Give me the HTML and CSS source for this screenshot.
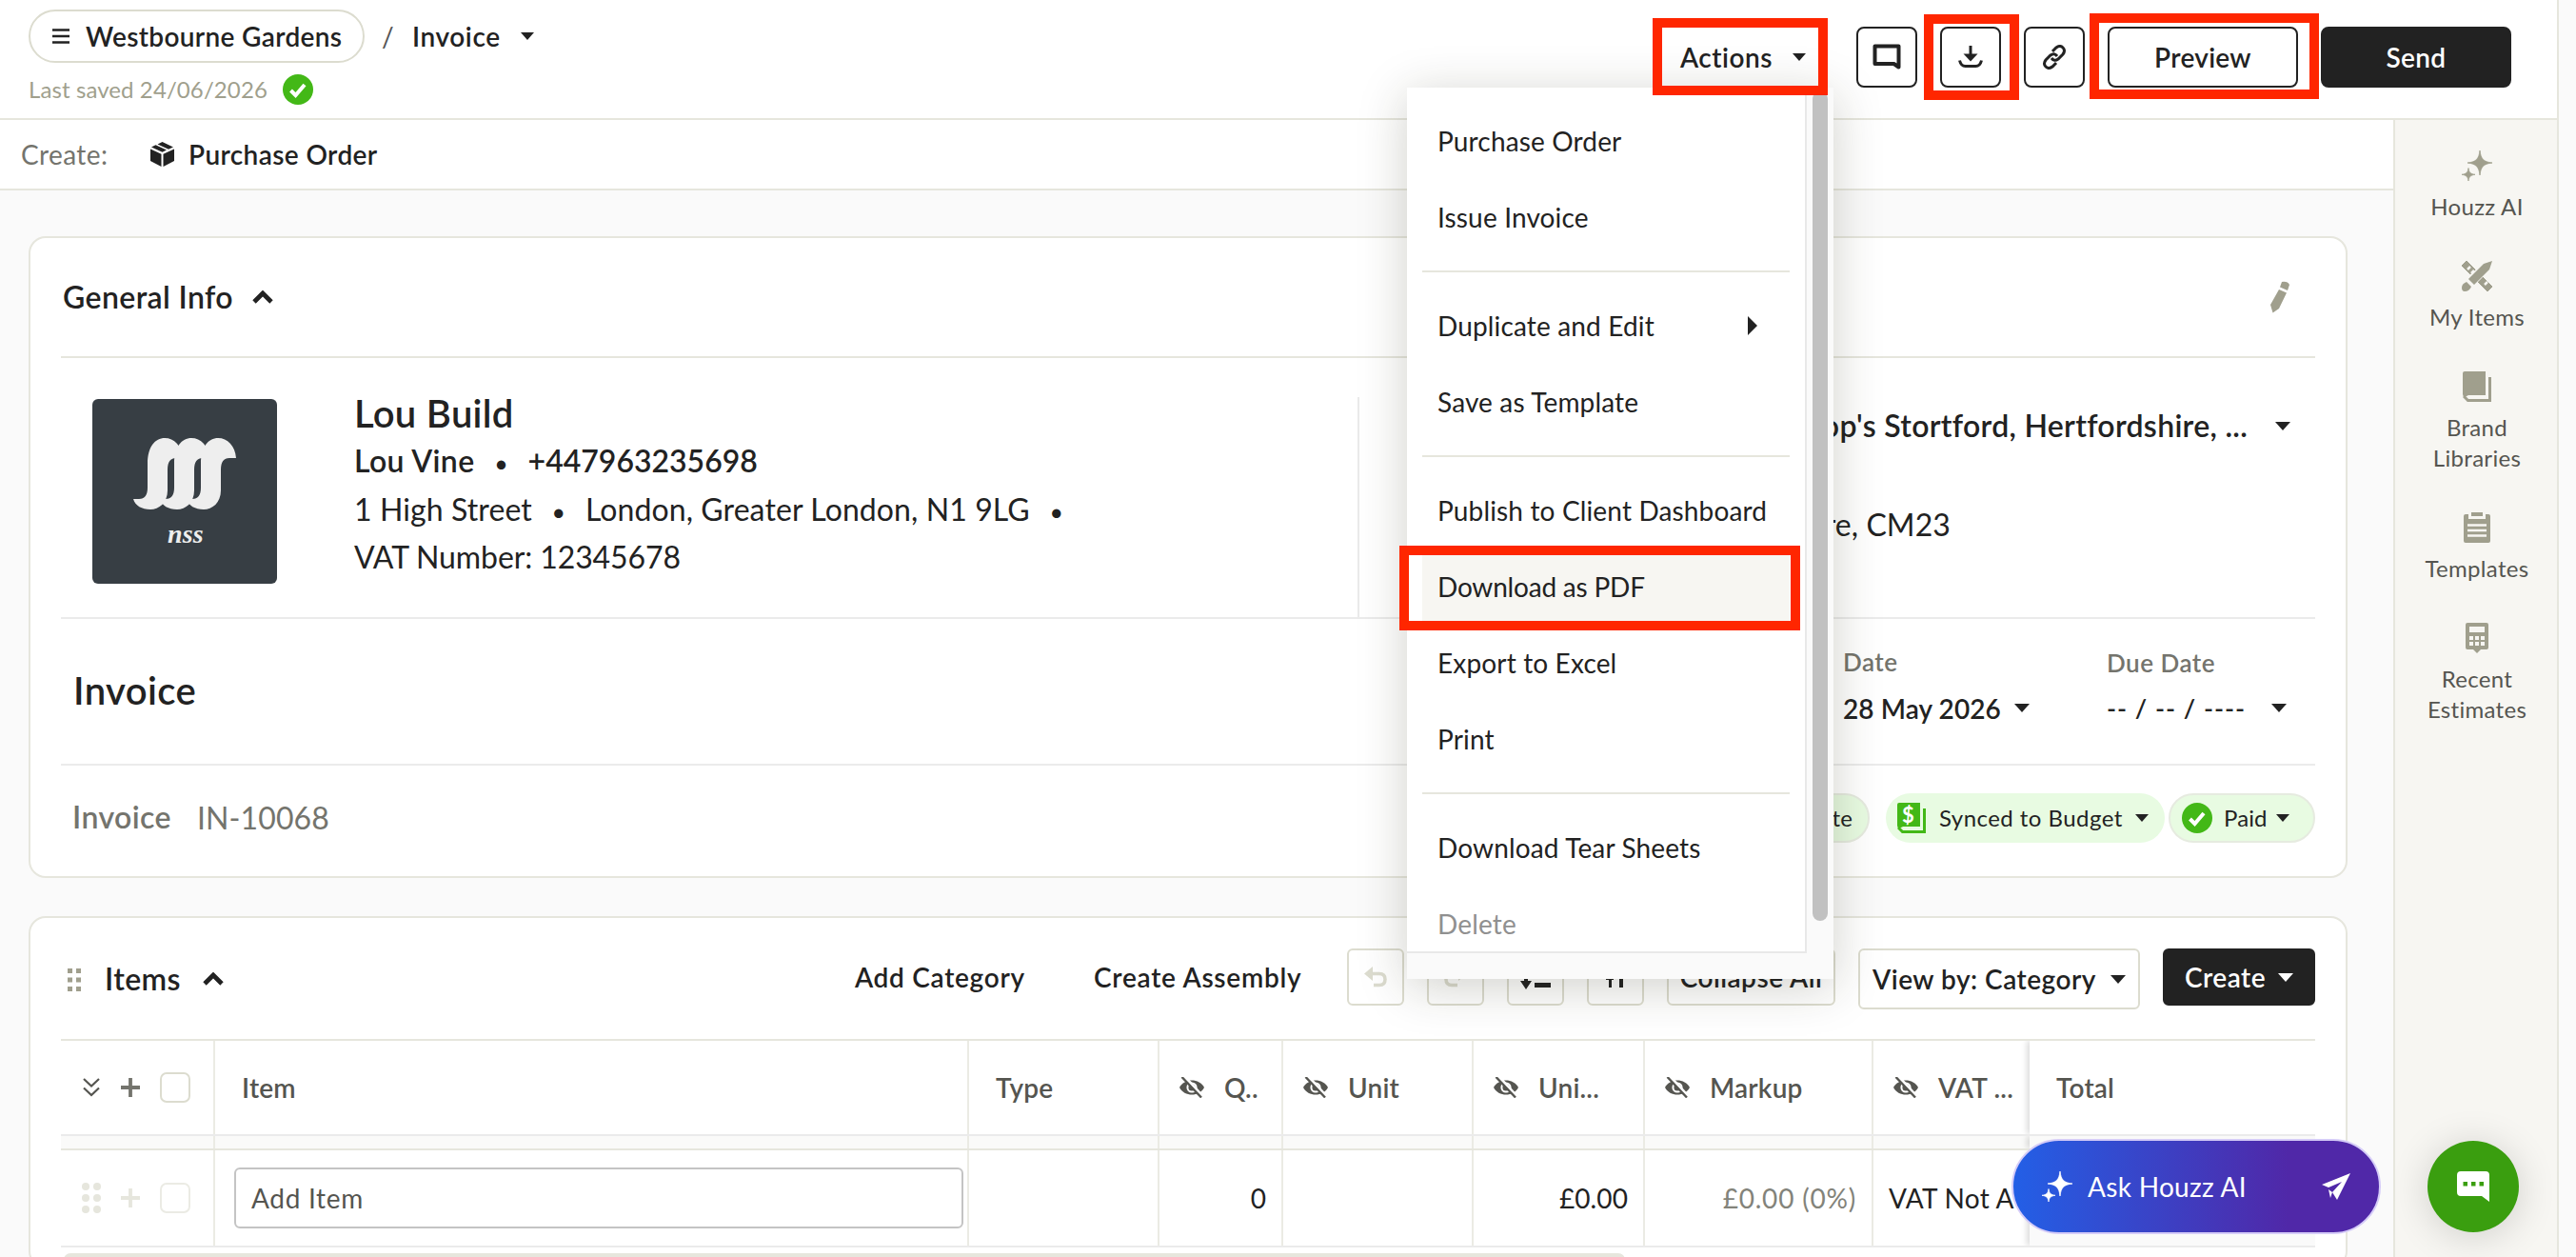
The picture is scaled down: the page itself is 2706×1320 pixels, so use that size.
FILE: index.html
```
<!DOCTYPE html>
<html lang="en-GB">
<head>
  <meta charset="UTF-8" />
  <title>Westbourne Gardens - Invoice</title>
  <link rel="stylesheet" href="styles.css">
</head>
<body>
  <!-- shared icons -->
  <svg class="defs" width="0" height="0">
    <symbol id="i-check" viewBox="0 0 32 32"><circle cx="16" cy="16" r="16" fill="#43b817"/><path d="M8.5 17l5 5L23 11" fill="none" stroke="#fff" stroke-width="4"/></symbol>
    <symbol id="i-up" viewBox="0 0 22 14"><path d="M2 12l9-9 9 9" fill="none" stroke="currentColor" stroke-width="4.8"/></symbol>
    <symbol id="i-eye" viewBox="0 0 26 22"><path d="M0 11C5 1 21 1 26 11C21 21 5 21 0 11z" fill="#555550"/><circle cx="13" cy="11" r="4.6" fill="none" stroke="#fff" stroke-width="2"/><path d="M5-1l20 22" stroke="#fff" stroke-width="3"/><path d="M2.500 0l20.500 21.500" stroke="#555550" stroke-width="2.400"/></symbol>
    <symbol id="i-spark" viewBox="0 0 32 32"><path d="M19 0c1 9 4 12 13 13c-9 1-12 4-13 13c-1-9-4-12-13-13c9-1 12-4 13-13zM7 18.500c.6 4.600 2.200 6.200 7 6.800c-4.800.6-6.400 2.200-7 6.700c-.6-4.500-2.200-6.100-7-6.700c4.800-.6 6.400-2.200 7-6.800z" fill="currentColor" stroke="currentColor" stroke-width=".8"/></symbol>
    <symbol id="i-plus" viewBox="0 0 20 20"><path d="M10 0v20M0 10h20" stroke="currentColor" stroke-width="3.800"/></symbol>
    <symbol id="i-book" viewBox="0 0 30 32"><path d="M2 0h22v25H6L2 27Q0 26 0 24V2Q0 0 2 0z" fill="currentColor"/><path d="M28.500 6v24.500H5.500L1 26" fill="none" stroke="currentColor" stroke-width="3"/></symbol>
  </svg>

  <div class="app">
    <header class="topbar">
      <div>
        <div class="crumbs">
          <a class="project"><svg width="18" height="16" viewBox="0 0 18 16"><path d="M0 1.500h18M0 8h18M0 14.500h18" stroke="#222" stroke-width="2.600"/></svg>Westbourne Gardens</a>
          <span class="slash">/</span>
          <span class="doc">Invoice</span><i class="caret"></i>
        </div>
        <div class="saved"><span>Last saved 24/06/2026</span><svg width="32" height="32"><use href="#i-check"/></svg></div>
      </div>
      <div class="top-actions">
        <button class="actions-btn">Actions <i class="caret"></i></button>
        <button class="btn icon"><svg width="30" height="28" viewBox="0 0 30 28"><path d="M2.500 2.500h25v22l-5-3.500h-20z" fill="none" stroke="#222" stroke-width="4" stroke-linejoin="round"/></svg></button>
        <button class="btn icon"><svg width="26" height="24" viewBox="0 0 26 24"><path d="M13 0v14" stroke="#222" stroke-width="3"/><path d="M5.500 8.500h15L13 16.500z" fill="#222"/><path d="M1.500 15.500q1.500 6 6 6h11q4.500 0 6-6" fill="none" stroke="#222" stroke-width="3"/></svg></button>
        <button class="btn icon link"><svg width="26" height="26" viewBox="0 0 26 26" fill="none" stroke="#222" stroke-width="3"><path d="M11 7l4-4q4-3 7 0q3 3 0 7l-5 5q-4 3-7-1"/><path d="M15 19l-4 4q-4 3-7 0q-3-3 0-7l5-5q4-3 7 1"/></svg></button>
        <button class="btn wide">Preview</button>
        <button class="btn wide dark">Send</button>
      </div>
    </header>

    <div class="body">
      <div class="content">
        <div class="create-bar">
          <span class="label">Create:</span>
          <svg width="25" height="26" viewBox="0 0 25 26"><path d="M0 7.500l11.500 5.200V26L0 20zM25 7.500l-11.500 5.200V26L25 20zM1 5.500l4.500-2.200l11.500 5.200l-4.500 2.300zM7.500 2.400L12.500 0l11.500 5.500l-5 2.300z" fill="#222"/></svg>
          <b>Purchase Order</b>
        </div>

        <main>
          <section class="card">
            <div class="card-head">
              <h2>General Info</h2>
              <svg width="22" height="14"><use href="#i-up"/></svg>
              <svg class="pencil" width="20" height="34" viewBox="0 0 20 34"><path d="M12 1q6-1 8 3l-2 6l-8-3.500zM9 9l8 3.500L9 29l-6.500 4.500L0 25z" fill="#a09f8d"/></svg>
            </div>

            <div class="company">
              <svg class="logo" width="194" height="194" viewBox="0 0 194 194">
                <rect width="194" height="194" rx="6" fill="#373e44"/>
                <g fill="#eee">
                  <path id="s" d="M43 105h6c6 0 9-4 9-12V68c0-18 8-27 18-27s18 8 19 21h-7c-6 0-9 4-9 12v22c0 13-9 20-18 20S45 112 43 105z"/>
                  <use href="#s" x="28"/>
                  <use href="#s" x="56"/>
                  <text x="79" y="151" class="logo-text">nss</text>
                </g>
              </svg>
              <div class="company-text">
                <h1>Lou Build</h1>
                <p class="contact"><b>Lou Vine</b><i>•</i><b>+447963235698</b></p>
                <p>1 High Street<i>•</i>London, Greater London, N1 9LG<i>•</i></p>
                <p class="vat-number">VAT Number: 12345678</p>
              </div>
              <div class="address">
                <p class="address-title"><b>Bishop's Stortford, Hertfordshire, ...</b><i class="caret lg"></i></p>
                <p class="address-line">Hertfordshire, CM23</p>
              </div>
            </div>

            <div class="doc-row">
              <h1>Invoice</h1>
              <div class="date"><label>Date</label><span>28 May 2026<i class="caret lg"></i></span></div>
              <div class="date due"><label>Due Date</label><span><em>-- / -- / ----</em><i class="caret lg"></i></span></div>
            </div>

            <div class="status-row">
              <b>Invoice</b><span class="number">IN-10068</span>
              <span class="pill outline estimate">Up to date</span>
              <span class="pill synced"><svg width="30" height="32"><use href="#i-book"/></svg><small>$</small>Synced to Budget<i class="caret"></i></span>
              <span class="pill outline paid"><svg width="32" height="32"><use href="#i-check"/></svg>Paid<i class="caret"></i></span>
            </div>
          </section>

          <section class="card items">
            <div class="items-head">
              <svg width="14" height="24" viewBox="0 0 14 24" fill="#a09f8d"><path d="M0 0h5v5H0zM9 0h5v5H9zM0 9.500h5v5H0zM9 9.500h5v5H9zM0 19h5v5H0zM9 19h5v5H9z"/></svg>
              <h2>Items</h2>
              <svg width="22" height="14"><use href="#i-up"/></svg>
              <a class="add-category">Add Category</a>
              <a class="create-assembly">Create Assembly</a>
              <button class="tool"><svg width="24" height="22" viewBox="0 0 24 22"><path d="M0 7.500L9 0v15z" fill="#dcdccf"/><path d="M7 7.500h9q6 0 6 6t-6 6h-6" fill="none" stroke="#dcdccf" stroke-width="3.500"/></svg></button>
              <button class="tool"><svg class="flip" width="24" height="22" viewBox="0 0 24 22"><path d="M0 7.500L9 0v15z" fill="#dcdccf"/><path d="M7 7.500h9q6 0 6 6t-6 6h-6" fill="none" stroke="#dcdccf" stroke-width="3.500"/></svg></button>
              <button class="tool"><svg width="32" height="26" viewBox="0 0 32 26" fill="#222"><path d="M4 0h4v17h4L6 26L0 17h4zM15 19h17v5H15zM15 9h12v4H15z"/></svg></button>
              <button class="tool"><svg width="22" height="26" viewBox="0 0 22 26" fill="#222"><path d="M1 2h8v14H7v8H4v-8H1zM15 0h4v24h-4z"/></svg></button>
              <button class="tool collapse">Collapse All</button>
              <button class="tool view-by">View by: Category <i class="caret lg"></i></button>
              <button class="tool create">Create <i class="caret lg"></i></button>
            </div>

            <div class="table">
              <div class="row head">
                <div class="controls">
                  <svg width="20" height="20" viewBox="0 0 20 20" fill="none" stroke="#555550" stroke-width="2.200"><path d="M2 1l8 7.500L18 1M2 10.500l8 7.500l8-7.500"/></svg>
                  <svg width="20" height="20"><use href="#i-plus"/></svg>
                  <i class="box"></i>
                </div>
                <div class="txt">Item</div>
                <div class="txt">Type</div>
                <div><svg width="26" height="22"><use href="#i-eye"/></svg>Q..</div>
                <div><svg width="26" height="22"><use href="#i-eye"/></svg>Unit</div>
                <div><svg width="26" height="22"><use href="#i-eye"/></svg>Uni...</div>
                <div><svg width="26" height="22"><use href="#i-eye"/></svg>Markup</div>
                <div><svg width="26" height="22"><use href="#i-eye"/></svg>VAT ...</div>
                <div class="txt total">Total</div>
              </div>
              <div class="row strip"><div></div><div></div><div></div><div></div><div></div><div></div><div></div><div></div><div class="total"></div></div>
              <div class="row line">
                <div class="controls faded">
                  <svg width="20" height="32" viewBox="0 0 20 32" fill="currentColor"><circle cx="4" cy="4" r="4"/><circle cx="16" cy="4" r="4"/><circle cx="4" cy="16" r="4"/><circle cx="16" cy="16" r="4"/><circle cx="4" cy="28" r="4"/><circle cx="16" cy="28" r="4"/></svg>
                  <svg width="20" height="20"><use href="#i-plus"/></svg>
                  <i class="box"></i>
                </div>
                <div class="name"><input type="text" placeholder="Add Item"></div>
                <div></div>
                <div class="num">0</div>
                <div></div>
                <div class="num">£0.00</div>
                <div class="num muted">£0.00 (0%)</div>
                <div class="vat">VAT Not A</div>
                <div class="total"></div>
              </div>
            </div>
            <div class="scroll-x"></div>
          </section>
        </main>
      </div>

      <aside>
        <a><svg width="32" height="32"><use href="#i-spark"/></svg>Houzz AI</a>
        <a><svg width="32" height="32" viewBox="0 0 32 32"><path d="M5 0l27 27l-5 5L0 5z" fill="#a09f8d" stroke="#a09f8d" stroke-linejoin="round"/><path d="M6 9l3-3M10 13l3-3M24 25l3-3" stroke="#f7f6f2" stroke-width="2.500"/><path d="M32 0l-2 9L9 30H0v-8L23 2z" fill="#f7f6f2"/><path d="M32 0l-3 9l-16 16l-6-6L23 3zM5 22l5 5q-2 5-7 5q-3 0-3-4q0-4 5-6z" fill="#a09f8d"/></svg>My Items</a>
        <a><svg width="30" height="32"><use href="#i-book"/></svg>Brand<br>Libraries</a>
        <a><svg width="28" height="32" viewBox="0 0 28 32"><path d="M0 4q0-2 2-2h3v5h18V2h3q2 0 2 2v26q0 2-2 2H2q-2 0-2-2z" fill="#a09f8d"/><path d="M8 0h12v4H8z" fill="#a09f8d"/><path d="M4 13.500h20M4 19h20M4 24.500h20" stroke="#f7f6f2" stroke-width="2.600"/></svg>Templates</a>
        <a><svg width="24" height="32" viewBox="0 0 24 32"><path d="M2 0h20q2 0 2 2v24q0 2-2 2h-6l-4 4l-4-4H2q-2 0-2-2V2q0-2 2-2z" fill="#a09f8d"/><path d="M4 4h16v6H4zM4 14h4v4H4zM10 14h4v4h-4zM16 14h4v4h-4zM4 20h4v4H4zM10 20h4v4h-4zM16 20h4v4h-4z" fill="#f7f6f2"/></svg>Recent<br>Estimates</a>
      </aside>
    </div>
  </div>

  <!-- Actions dropdown -->
  <div class="menu">
    <div class="menu-list">
      <a>Purchase Order</a>
      <a>Issue Invoice</a>
      <hr>
      <a class="sub">Duplicate and Edit</a>
      <a>Save as Template</a>
      <hr>
      <a>Publish to Client Dashboard</a>
      <a class="active">Download as PDF</a>
      <a>Export to Excel</a>
      <a>Print</a>
      <hr>
      <a>Download Tear Sheets</a>
      <a class="disabled">Delete</a>
    </div>
    <div class="menu-scroll"></div>
  </div>

  <div class="ask"><svg width="32" height="32"><use href="#i-spark"/></svg>Ask Houzz AI<svg class="plane" width="30" height="28" viewBox="0 0 30 28"><path d="M30 0L16 28l-5-8L21 9L7 15L0 12z" fill="#fff"/><path d="M7 17l4 3l-2 6z" fill="#fff"/></svg></div>
  <div class="chat"><svg width="34" height="32" viewBox="0 0 34 32"><path d="M4 0h26q4 0 4 4v28l-8-6H4q-4 0-4-4V4q0-4 4-4z" fill="#fff"/><path d="M6.500 11h4.500v4.500H6.500zM15 11h4.500v4.500H15zM23.500 11h4.500v4.500h-4.500z" fill="#3a9e0f"/></svg></div>

  <!-- highlight frames -->
  <div class="mark mark-actions"></div>
  <div class="mark mark-download"></div>
  <div class="mark mark-preview"></div>
  <div class="mark mark-pdf"></div>
</body>
</html>
```
FILE: styles.css
```
* {
  box-sizing: border-box;
}

body {
  margin: 0;
  width: 2706px;
  height: 1320px;
  overflow: hidden;
  position: relative;
  background: #fafafa;
  color: #222;
  font-family: Lato, sans-serif;
  font-size: 28px;
  letter-spacing: 0.1px;
}

h1, h2, p {
  margin: 0;
}

h1, h2, b {
  font-weight: 600;
  letter-spacing: 0.4px;
}

h1 {
  font-size: 40px;
}

h2 {
  font-size: 32px;
}

svg {
  flex: none;
  display: block;
}

.defs {
  position: absolute;
}

button {
  font: 600 28px Lato, sans-serif;
  letter-spacing: 0.3px;
  color: #222;
  background: #fff;
  padding: 0;
  border: none;
}

.caret {
  flex: none;
  display: inline-block;
  border: 7px solid transparent;
  border-top: 8px solid currentColor;
  border-bottom: 0;
}

.caret.lg {
  border-width: 9px 8px 0;
}

.app {
  width: 2688px;
  height: 1320px;
  overflow: hidden;
  border-right: 2px solid #e6e6dd;
}

/* top bar */
.topbar {
  display: flex;
  justify-content: space-between;
  height: 126px;
  padding: 10px 48px 0 30px;
  background: #fff;
  border-bottom: 2px solid #e6e6dd;
}

.crumbs {
  display: flex;
  align-items: center;
  height: 56px;
  font-weight: 600;
  letter-spacing: 0.35px;
}

.project {
  display: flex;
  align-items: center;
  gap: 17px;
  width: 353px;
  height: 56px;
  padding-left: 23px;
  border: 2px solid #dcdccf;
  border-radius: 28px;
}

.slash {
  width: 50px;
  padding-left: 18px;
  font-weight: 400;
  color: #555;
}

.doc {
  width: 114px;
  letter-spacing: 0.6px;
}

.saved {
  display: flex;
  align-items: center;
  justify-content: space-between;
  width: 299px;
  height: 32px;
  margin-top: 12px;
  font-size: 24px;
  color: #a09f8d;
}

.saved span {
  padding-bottom: 2px;
}

.top-actions {
  display: flex;
  gap: 24px;
  padding-top: 18px;
}

.actions-btn {
  width: 184px;
  height: 64px;
  display: flex;
  align-items: center;
  gap: 21px;
  padding-left: 23px;
  letter-spacing: 0.5px;
}

.btn {
  width: 64px;
  height: 64px;
  display: flex;
  align-items: center;
  justify-content: center;
  border: 2px solid #222;
  border-radius: 8px;
}

.btn.wide {
  width: 200px;
}

.btn.dark {
  background: #222;
  color: #fff;
}

/* layout */
.body {
  display: flex;
  height: 1194px;
}

.content {
  flex: 1;
  min-width: 0;
}

.create-bar {
  display: flex;
  align-items: center;
  height: 74px;
  padding-left: 22px;
  background: #fff;
  border-bottom: 2px solid #e6e6dd;
}

.create-bar .label {
  width: 136px;
  letter-spacing: 0.4px;
  color: #74746d;
}

.create-bar b {
  margin-left: 15px;
}

main {
  display: flex;
  flex-direction: column;
  gap: 40px;
  padding: 48px 48px 0 30px;
}

.card {
  padding: 0 32px;
  background: #fff;
  border: 2px solid #e6e6dd;
  border-radius: 18px;
}

.card-head {
  display: flex;
  align-items: center;
  height: 126px;
  border-bottom: 2px solid #e6e6dd;
}

.card-head h2 {
  width: 201px;
  padding: 0 0 2px 2px;
}

.pencil {
  margin: 0 27px 0 auto;
}

/* company */
.company {
  display: flex;
  height: 274px;
  border-bottom: 2px solid #ebebeb;
}

.logo {
  margin: 43px 81px 0 33px;
}

.logo-text {
  font: italic bold 28px "Liberation Serif", serif;
}

.company-text {
  width: 1054px;
  padding-top: 33px;
}

.company-text h1 {
  line-height: 50px;
  letter-spacing: 0.3px;
}

.company-text p {
  font-size: 32px;
  line-height: 50.5px;
}

.company-text .contact b + i + b {
  letter-spacing: 0;
}

.company-text .vat-number {
  letter-spacing: -0.1px;
}

.company-text i {
  display: inline-block;
  width: 56px;
  text-align: center;
  font-style: normal;
  font-size: 25px;
  line-height: 40px;
}

.address {
  flex: 1;
  margin-top: 41px;
  border-left: 2px solid #ebebeb;
  font-size: 32px;
  line-height: 60px;
  text-align: right;
}

.address-title {
  display: flex;
  align-items: center;
  justify-content: flex-end;
  gap: 29px;
  padding-right: 26px;
}

.address-title b {
  letter-spacing: 0.3px;
}

.address-line {
  margin-top: 44px;
  padding-right: 383px;
}

.doc-row {
  display: flex;
  align-items: center;
  height: 154px;
  padding-left: 13px;
  border-bottom: 2px solid #ebebeb;
}

.doc-row h1 {
  flex: 1;
  padding-bottom: 2px;
}

.date {
  width: 277px;
  padding-bottom: 13px;
  font-weight: 600;
}

.date.due {
  width: 219px;
}

.date label {
  display: block;
  line-height: 48px;
  font-size: 26px;
  letter-spacing: 0.5px;
  color: #74746d;
}

.date.due label {
  padding-top: 2px;
  line-height: 46px;
}

.date span {
  display: flex;
  align-items: center;
  gap: 14px;
  line-height: 50px;
}

.date em {
  width: 159px;
  font-style: normal;
  letter-spacing: 1px;
  font-size: 27px;
}

.status-row {
  display: flex;
  align-items: center;
  height: 116px;
  padding: 0 0 7px 12px;
  font-size: 32px;
  color: #74746d;
}

.status-row b {
  width: 131px;
  padding-bottom: 2px;
}

.number {
  flex: 1;
}

.pill {
  display: flex;
  align-items: center;
  height: 52px;
  border-radius: 26px;
  background: #e8fbe2;
  font-size: 24px;
  color: #222;
}

.pill.outline {
  border: 2px solid #e6ebe0;
}

.estimate {
  padding: 0 16px;
}

.synced {
  position: relative;
  width: 293px;
  margin: 0 4px 0 17px;
  padding-left: 12px;
  letter-spacing: 0.45px;
  white-space: nowrap;
}

.synced svg {
  color: #43b817;
  margin-right: 14px;
}

.synced small {
  position: absolute;
  left: 17px;
  top: 9px;
  font: bold 22px/28px Lato, sans-serif;
  color: #fff;
}

.synced .caret {
  margin-left: 13px;
}

.paid {
  width: 154px;
  padding-left: 12px;
}

.paid svg {
  margin-right: 12px;
}

.paid .caret {
  margin-left: 9px;
}

/* items */
.items-head {
  display: flex;
  height: 129px;
  padding-top: 32px;
  border-bottom: 2px solid #e6e6dd;
  line-height: 60px;
  font-weight: 600;
}

.items-head > svg {
  margin: 21px 25px 0 7px;
}

.items-head > svg + h2 {
  width: 103px;
}

.items-head h2 + svg {
  margin: 25px 0 0 0;
}

.items-head h2 {
  line-height: 63px;
}

.add-category {
  margin-left: auto;
  width: 251px;
  letter-spacing: 0.7px;
}

.create-assembly {
  width: 242px;
  letter-spacing: 0.75px;
}

.tool {
  display: flex;
  align-items: center;
  justify-content: center;
  width: 60px;
  height: 60px;
  margin-left: 24px;
  border: 2px solid #dcdccf;
  border-radius: 6px;
  letter-spacing: 0.5px;
  white-space: nowrap;
}

.flip {
  transform: scaleX(-1);
}

.collapse {
  width: 177px;
}

.view-by {
  width: 296px;
  height: 64px;
  gap: 15px;
}

.create {
  width: 160px;
  gap: 13px;
  background: #222;
  border-color: #222;
  color: #fff;
}

.row {
  display: grid;
  grid-template-columns: 162px 792px 200px 130px 200px 180px 240px 164px 300px;
  border-bottom: 2px solid #ebebeb;
}

.row > div {
  display: flex;
  align-items: center;
  overflow: hidden;
  white-space: nowrap;
  border-right: 2px solid #ebebe4;
}

.row > div:nth-child(8) {
  border-right: none;
}

.row > .total {
  border-right: none;
  overflow: visible;
  box-shadow: -3px 0 6px rgba(0, 0, 0, 0.14);
  clip-path: inset(0 0 0 -12px);
}

.head {
  height: 100px;
  font-weight: 600;
  letter-spacing: 0.2px;
  color: #555550;
}

.head > div {
  padding-left: 21px;
  gap: 21px;
}

.head > .txt {
  padding-left: 28px;
}

.row > .controls {
  gap: 21px;
  padding-left: 22px;
}

.controls svg + svg {
  color: #74746d;
}

.box {
  width: 32px;
  height: 32px;
  border: 2px solid #dcdccf;
  border-radius: 7px;
}

.faded,
.faded svg + svg {
  color: #e6e6dd;
}

.faded .box {
  border-color: #ebebe4;
}

.strip {
  height: 15px;
  background: #fafaf9;
  border-bottom-color: #e6e6dd;
}

.line {
  height: 102px;
}

.row > .name {
  padding: 0 4px 0 20px;
}

.name input {
  width: 100%;
  height: 64px;
  padding: 0 16px;
  border: 2px solid #c4c4c4;
  border-radius: 6px;
  font: 28px Lato, sans-serif;
  letter-spacing: 0.7px;
}

.name input::placeholder {
  color: #555550;
}

.row > .num {
  justify-content: flex-end;
  padding-right: 16px;
}

.row > .muted {
  color: #83837a;
  letter-spacing: 0.8px;
}

.row > .vat {
  padding-left: 16px;
  letter-spacing: 0.3px;
}

.line > .total {
  background: #fafafa;
}

.scroll-x {
  width: 1640px;
  height: 14px;
  margin: 6px 0 0 3px;
  border-radius: 7px;
  background: #e6e6dd;
}

/* right rail */
aside {
  width: 172px;
  padding: 32px 0 0 2px;
  background: #f7f6f2;
  border-left: 2px solid #e6e6dd;
}

aside a {
  display: flex;
  flex-direction: column;
  align-items: center;
  margin-bottom: 41px;
  font-size: 24px;
  line-height: 32px;
  letter-spacing: 0.3px;
  text-align: center;
  color: #555550;
}

aside svg {
  margin-bottom: 11px;
  color: #a09f8d;
}

/* dropdown */
.menu {
  position: absolute;
  left: 1478px;
  top: 92px;
  width: 448px;
  height: 936px;
  background: #fafafa;
  box-shadow: 0 8px 48px rgba(40, 40, 20, 0.22);
  display: flex;
  align-items: flex-start;
}

.menu-list {
  width: 420px;
  height: 909px;
  padding: 16px 16px 0;
  overflow: hidden;
  background: #fff;
  border-right: 2px solid #e8e8e8;
  border-bottom: 2px solid #e8e8e8;
}

.menu-list a {
  display: flex;
  align-items: center;
  justify-content: space-between;
  height: 80px;
  padding-left: 16px;
  letter-spacing: 0.15px;
  white-space: nowrap;
}

.menu-list hr {
  height: 2px;
  margin: 16px 0;
  border: none;
  background: #e6e6dd;
}

.sub::after {
  content: "";
  margin-right: 34px;
  border: 10px solid transparent;
  border-left-color: #222;
  border-right: 0;
}

.menu-list .active {
  background: #f7f6f2;
  letter-spacing: -0.2px;
}

.menu-list .disabled {
  color: #909090;
}

.menu-scroll {
  width: 16px;
  height: 871px;
  margin: 4px 0 0 6px;
  border-radius: 8px;
  background: #c1c1c1;
}

/* floating buttons */
.ask {
  position: absolute;
  left: 2113px;
  top: 1196px;
  width: 388px;
  height: 100px;
  display: flex;
  align-items: center;
  gap: 16px;
  padding: 0 30px;
  border: 2px solid #d5ccf8;
  border-radius: 50px;
  background: linear-gradient(90deg, #235fe6, #5028a8 75%);
  color: #fff;
  letter-spacing: 0.3px;
}

.plane {
  margin-left: auto;
}

.chat {
  position: absolute;
  left: 2550px;
  top: 1198px;
  width: 96px;
  height: 96px;
  display: flex;
  align-items: center;
  justify-content: center;
  border-radius: 50%;
  background: #3a9e0f;
  box-shadow: 0 4px 40px rgba(0, 0, 0, 0.16);
}

/* red frames */
.mark {
  position: absolute;
  border: 10px solid #ff2600;
}

.mark-actions {
  left: 1736px;
  top: 19px;
  width: 184px;
  height: 81px;
}

.mark-download {
  left: 2021px;
  top: 15px;
  width: 100px;
  height: 90px;
}

.mark-preview {
  left: 2195px;
  top: 14px;
  width: 241px;
  height: 90px;
}

.mark-pdf {
  left: 1470px;
  top: 573px;
  width: 421px;
  height: 89px;
}
```
